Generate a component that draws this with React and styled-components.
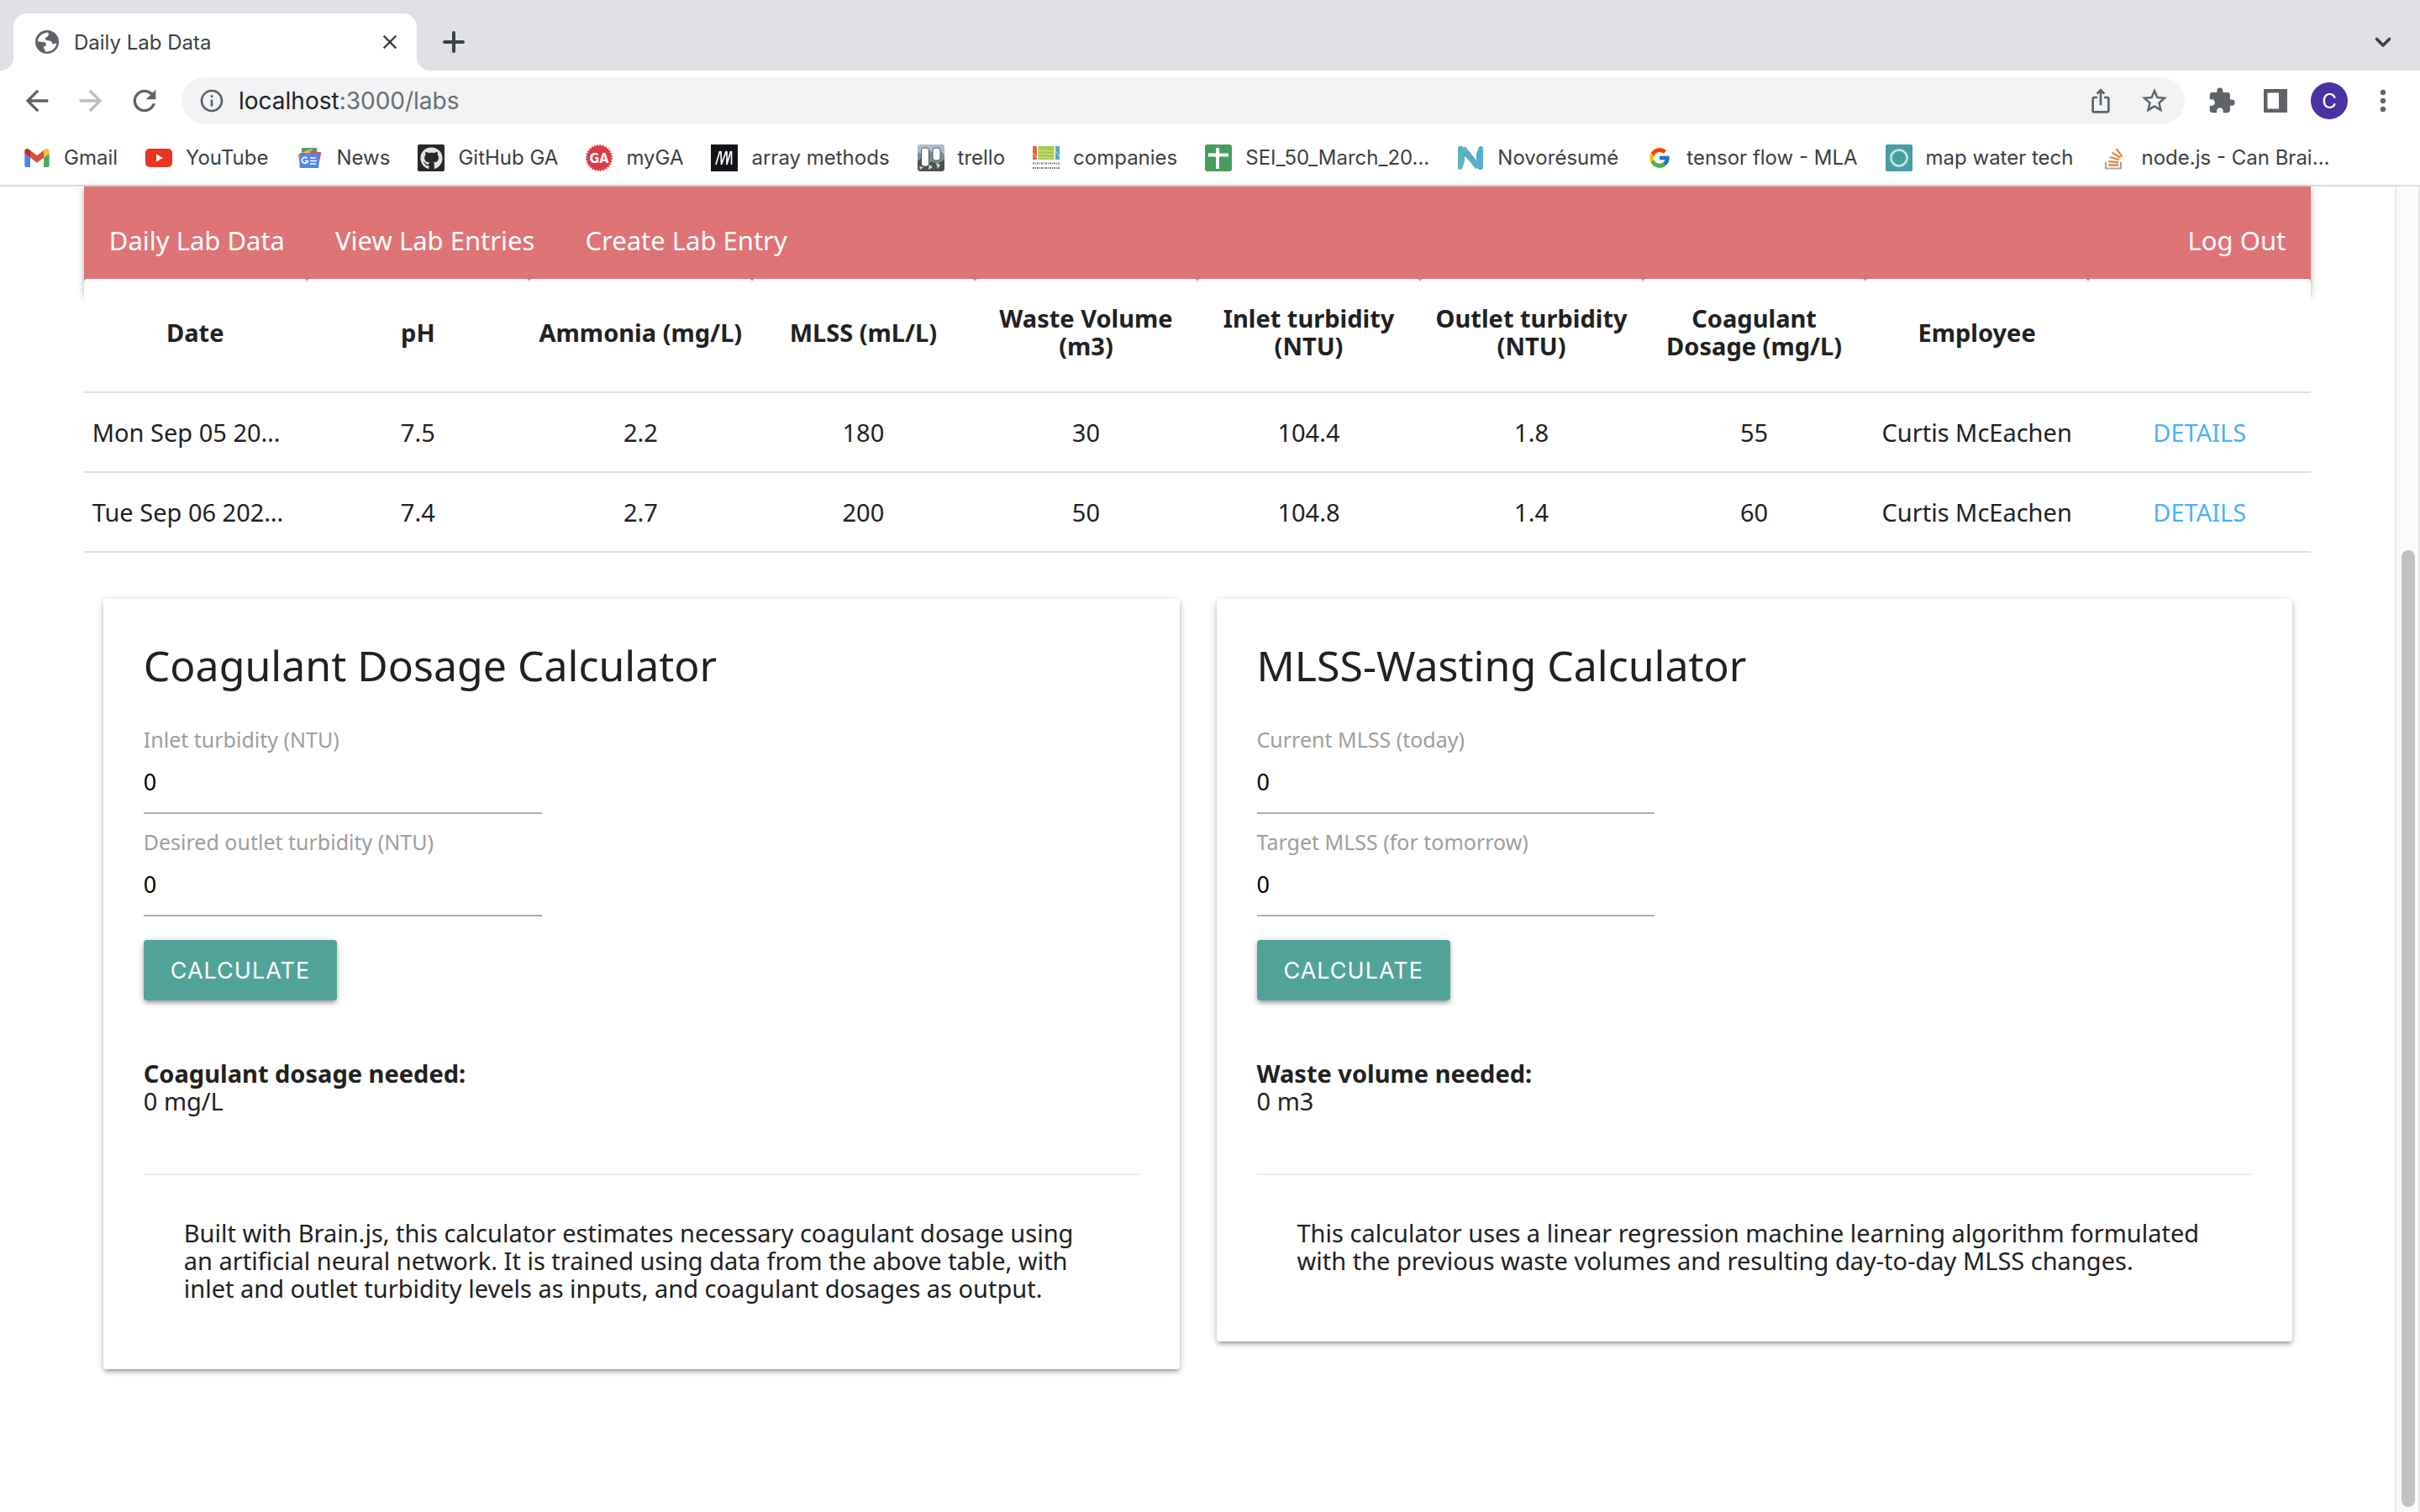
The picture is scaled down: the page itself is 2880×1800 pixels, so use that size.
import React, { useState } from "react";
import styled, { createGlobalStyle, css } from "styled-components";
import {
  MdArrowBack,
  MdArrowForward,
  MdClose,
  MdExtension,
  MdInfoOutline,
  MdIosShare,
  MdMoreVert,
  MdRefresh,
  MdStarBorder,
} from "react-icons/md";
import { FcGoogle } from "react-icons/fc";
import { FaGithub } from "react-icons/fa";

const uiFont = `Inter, Roboto, "Liberation Sans", sans-serif`;
const pageFont = `"Lucida Grande", "Noto Sans", "Open Sans", sans-serif`;

const raised = css`
  box-shadow: 0 4px 4px 0 rgba(0, 0, 0, 0.14), 0 6px 2px -4px rgba(0, 0, 0, 0.12),
    0 2px 10px 0 rgba(0, 0, 0, 0.2);
`;

const GlobalStyle = createGlobalStyle`
  *, *::before, *::after { box-sizing: border-box; }
  body { margin: 0; background: #fff; }
  button, input { font: inherit; margin: 0; }
  svg { display: block; flex: none; }
`;

const Window = styled.div`
  display: flex;
  flex-direction: column;
  min-height: 100vh;
  overflow: hidden;
  font-family: ${uiFont};
  color: #3c4043;
`;

/* ---------- browser chrome ---------- */

const TabStrip = styled.div`
  display: flex;
  align-items: flex-end;
  height: 84px;
  padding: 0 24px 0 16px;
  background: #dfe1e5;
`;

const Tab = styled.div`
  position: relative;
  display: flex;
  align-items: center;
  gap: 16px;
  width: 480px;
  height: 68px;
  padding: 0 18px 0 24px;
  border-radius: 16px 16px 0 0;
  background: #fff;
  font-size: 24px;

  &::before,
  &::after {
    content: "";
    position: absolute;
    bottom: 0;
    width: 16px;
    height: 16px;
  }
  &::before {
    right: 100%;
    background: radial-gradient(circle at 0 0, #dfe1e5 16px, #fff 16px);
  }
  &::after {
    left: 100%;
    background: radial-gradient(circle at 100% 0, #dfe1e5 16px, #fff 16px);
  }
`;

const TabTitle = styled.span`
  flex: 1;
`;

const IconButton = styled.button`
  display: flex;
  align-items: center;
  justify-content: center;
  width: ${(p) => p.$size || 64}px;
  height: ${(p) => p.$size || 64}px;
  padding: 0;
  border: 0;
  background: none;
  color: ${(p) => (p.$faded ? "#babcbe" : "#5f6368")};
`;

const StripButton = styled(IconButton)`
  height: 68px;
  color: #3c4043;
  margin-left: ${(p) => (p.$end ? "auto" : "12px")};
`;

const Toolbar = styled.div`
  display: flex;
  align-items: center;
  height: 72px;
  padding: 0 12px;
`;

const AddressBar = styled.div`
  display: flex;
  flex: 1;
  align-items: center;
  height: 56px;
  margin: 0 12px;
  padding: 0 4px 0 20px;
  border-radius: 28px;
  background: #f1f3f4;
  color: #5f6368;
`;

const Address = styled.span`
  flex: 1;
  margin-left: 16px;
  font-size: 28px;
  color: #6b6e71;

  b {
    font-weight: 400;
    color: #202124;
  }
`;

const Avatar = styled.span`
  display: flex;
  align-items: center;
  justify-content: center;
  width: 44px;
  height: 44px;
  border-radius: 50%;
  background: #4a32a3;
  color: #fff;
  font-size: 24px;
`;

const BookmarkBar = styled.nav`
  display: flex;
  align-items: center;
  gap: 33px;
  height: 66px;
  padding: 0 28px;
  border-bottom: 2px solid #dadcdf;
`;

const Bookmark = styled.a`
  display: flex;
  align-items: center;
  gap: 16px;
  color: #3c4043;
  font-size: 24px;
  line-height: 32px;
  text-decoration: none;
  white-space: nowrap;
`;

/* ---------- page ---------- */

const Viewport = styled.div`
  display: flex;
  flex: 1;
`;

const Page = styled.main`
  flex: 1;
  min-width: 0;
  font-family: ${pageFont};
  font-size: 29px;
  line-height: 33px;
  color: #212121;
`;

const Container = styled.div`
  width: 93%;
  margin: 0 auto;
`;

const NavBar = styled.nav`
  display: flex;
  align-items: center;
  height: 128px;
  background: #df7476;
  ${raised}
`;

const NavLink = styled.a`
  padding: 0 30px;
  margin-left: ${(p) => (p.$end ? "auto" : "0")};
  color: #fff;
  font-size: 31px;
  text-decoration: none;
`;

const LabTable = styled.table`
  position: relative;
  width: 100%;
  margin-top: -18px;
  border-spacing: 0;
  border-collapse: separate;
  table-layout: fixed;
`;

const HeadCell = styled.th`
  padding: 30px 8px 38px;
  border-bottom: 2px solid #e0e0e0;
  border-radius: 4px 4px 0 0;
  background: #fff;
  font-weight: 700;
`;

const Cell = styled.td`
  padding: 30px 10px;
  border-bottom: 2px solid #e0e0e0;
  text-align: ${(p) => (p.$left ? "left" : "center")};
  white-space: nowrap;
`;

const DetailsLink = styled.a`
  color: #4cb1f7;
  text-decoration: none;
`;

const Cards = styled.div`
  display: grid;
  grid-template-columns: 1fr 1fr;
  align-items: start;
  gap: 44px;
  padding: 55px 22px 0 23px;
`;

const Card = styled.form`
  padding: 48px 48px 80px;
  border-radius: 4px;
  background: #fff;
  ${raised}
`;

const CardTitle = styled.h1`
  margin: 0 0 39px;
  font-size: 50px;
  font-weight: 400;
  line-height: 62px;
`;

const Field = styled.label`
  display: block;
  width: 40%;
  margin-bottom: 15px;
  color: #9e9e9e;
  font-size: 25px;
  line-height: 36px;
  white-space: nowrap;
`;

const FieldInput = styled.input`
  display: block;
  width: 100%;
  height: 71px;
  padding: 0 0 4px;
  border: 0;
  border-bottom: 2px solid #adadad;
  outline: 0;
  background: none;
  color: #000;
  font-size: 27px;
`;

const CalculateButton = styled.button`
  height: 72px;
  margin: 13px 0 70px;
  padding: 0 32px;
  border: 0;
  border-radius: 4px;
  background: #52a49a;
  color: #fff;
  font-family: ${uiFont};
  font-size: 27px;
  letter-spacing: 1px;
  ${raised}
`;

const Result = styled.p`
  margin: 0;
`;

const Divider = styled.hr`
  height: 2px;
  margin: 70px 0 52px;
  border: 0;
  background: #ececec;
`;

const Note = styled.p`
  margin: 0 48px;
`;

const ScrollTrack = styled.div`
  display: flex;
  flex-direction: column;
  justify-content: flex-end;
  width: 30px;
  padding: 12px 4px 6px 6px;
  border: solid #e8e8e8;
  border-width: 0 2px;
  background: #fafafa;
`;

const ScrollThumb = styled.div`
  width: 16px;
  height: 73%;
  border-radius: 8px;
  background: #c1c1c1;
`;

/* ---------- icons ---------- */

const Glyph = ({ children, box = 32, size = 32 }) => (
  <svg width={size} height={size} viewBox={`0 0 ${box} ${box}`} fill="none" aria-hidden="true">
    {children}
  </svg>
);

const GlobeIcon = () => (
  <Glyph>
    <circle cx="16" cy="16" r="14" fill="#5f6368" />
    <path
      d="M17 4.500C10 5 5 10 4.800 15.500L11 16c3.500 0 4.500 2 3.500 4.500L11.500 22l3 5.500C20.500 28 26.500 24 27.300 17.500L22.500 18.500C22 14 18 15 14.500 13.500c-2-2 1-3.500 2.500-4.500 1.500-1.200 1.200-3 0-4.500z"
      fill="#fff"
    />
  </Glyph>
);

const PlusIcon = () => (
  <Glyph>
    <path d="M16 5v22M5 16h22" stroke="currentColor" strokeWidth="4" strokeLinecap="round" />
  </Glyph>
);

const ChevronIcon = () => (
  <Glyph>
    <path d="M8.500 12.500 16 20l7.500-7.500" stroke="currentColor" strokeWidth="3.600" strokeLinecap="round" strokeLinejoin="round" />
  </Glyph>
);

const SidePanelIcon = () => (
  <Glyph>
    <path d="M2 2h28v28H2zM6.500 6.500v19H20v-19z" fill="currentColor" fillRule="evenodd" />
  </Glyph>
);

const GmailIcon = () => (
  <svg width="32" height="32" viewBox="48 27 96 96" aria-hidden="true">
    <path fill="#4f86ec" d="M58 108h14V74L52 59v43c0 3.320 2.690 6 6 6" />
    <path fill="#58a55c" d="M120 108h14c3.320 0 6-2.690 6-6V59l-20 15" />
    <path fill="#f1bd42" d="M120 48v26l20-15v-8c0-7.420-8.470-11.650-14.400-7.200" />
    <path fill="#d95140" d="M72 74V48l24 18 24-18v26L96 92" />
    <path fill="#b3362a" d="M52 51v8l20 15V48l-5.600-4.200c-5.940-4.450-14.400-.22-14.400 7.200" />
  </svg>
);

const YouTubeIcon = () => (
  <Glyph>
    <rect y="5" width="32" height="22" rx="5" fill="#ea3323" />
    <path d="M13 11.500v9l8-4.500z" fill="#fff" />
  </Glyph>
);

const NewsIcon = () => (
  <Glyph>
    <rect x="7" y="4" width="18" height="14" rx="1" fill="#4f9d67" />
    <path d="M2 12 19 5l3 10-17 8z" fill="#f1bd42" />
    <path d="m17 7 13.500 2.500L27 24l-10-4z" fill="#d95140" />
    <rect x="4.500" y="10" width="23" height="18" rx="1" fill="#5186ec" />
    <path d="M13.500 16.500a3.500 3.500 0 1 0 .8 3h-3.300" stroke="#fff" strokeWidth="1.700" />
    <path d="M17 16h7M17 19.500h8M17 23h7" stroke="#fff" strokeWidth="1.700" />
  </Glyph>
);

const IconTile = styled.span`
  display: flex;
  align-items: center;
  justify-content: center;
  width: 32px;
  height: 32px;
  border-radius: 2px;
  background: ${(p) => p.$background || "none"};
  color: #e4e4e4;
`;

const GaIcon = () => (
  <Glyph>
    <circle cx="16" cy="16" r="14.500" fill="#da3b41" />
    <circle cx="16" cy="16" r="14.800" stroke="#da3b41" strokeWidth="2.200" strokeDasharray="2 1.320" />
    <text x="16" y="22" textAnchor="middle" fill="#fff" fontFamily="DejaVu Sans Condensed, Liberation Sans, sans-serif" fontWeight="700" fontSize="16">
      GA
    </text>
  </Glyph>
);

const ArrayIcon = () => (
  <Glyph>
    <rect width="32" height="32" fill="#15141a" />
    <path d="m6 24 4.500-15.500h1.500L12.500 24l5.500-15.500h1L19 24M19 24l4.500-15.500h1V24" stroke="#fff" strokeWidth="1.700" strokeLinejoin="bevel" />
  </Glyph>
);

const TrelloIcon = () => (
  <Glyph>
    <rect width="32" height="32" rx="4" fill="#7f8b95" />
    <path d="M0 4a4 4 0 0 1 4-4h24a4 4 0 0 1 4 4v8l-5-4-6 3-8-4-7 5-6-3z" fill="#aebdcb" />
    <path d="m0 20 5-4 4 9 8-5 6 3 9-5v10a4 4 0 0 1-4 4H4a4 4 0 0 1-4-4z" fill="#4c5150" />
    <path d="m14 24 4 3-5 3zm8-2 5 2-3 5zm-20 4 5 1-4 3z" fill="#d9dcdd" />
    <rect x="4.500" y="4" width="9" height="22" rx="3" fill="#fff" stroke="#50575c" />
    <rect x="18" y="4" width="9" height="15" rx="3" fill="#fff" stroke="#50575c" />
  </Glyph>
);

const CompaniesIcon = () => (
  <Glyph>
    <path d="M0 2h5v16H0z" fill="#d96b3b" />
    <path d="M6.500 2h19v16h-19z" fill="#a8c94a" />
    <path d="M27 2h5v16h-5z" fill="#55a5d6" />
    <path d="M6.500 8c6-3 12 2 19-1M6.500 12c6-3 12 2 19-1M6.500 16c6-3 12 2 19-1M0 10l5 6M27 8l5 6" stroke="#d9e8a6" />
    <path d="M0 22.500h32M0 28h32" stroke="#777" strokeWidth="1.800" strokeDasharray="2 1 1 1" />
  </Glyph>
);

const SheetIcon = () => (
  <Glyph>
    <rect width="32" height="32" rx="3" fill="#4a9c5e" />
    <path d="M4 12.500h24M15 4v25" stroke="#fff" strokeWidth="4" />
  </Glyph>
);

const NovoIcon = () => (
  <Glyph>
    <path d="M1 5c0-3 4-4 6-1.500l2 2.500v14L6.500 28C5 31 1 30.500 1 27.500z" fill="#5fb5bb" />
    <path d="M31 27c0 3-4 4-6 1.500L23 26V12l2.500-8C27 1 31 1.500 31 4.500z" fill="#53add0" />
    <path d="M1.500 3.500C3 1 6 1.500 8 4l22.500 24.500c-1.500 2-4 2-6 0L1.500 7z" fill="#57b0c8" />
    <path d="M7 4.500 25 27" stroke="#57b0c8" strokeWidth="7" />
  </Glyph>
);

const MapIcon = () => (
  <Glyph>
    <rect width="32" height="32" rx="2" fill="#479fa3" />
    <circle cx="16" cy="16" r="9.500" stroke="#b5e2df" strokeWidth="2.600" />
    <path d="M6 14c1-9 19-10 20 2M7 19c3 9 15 8 18-1" stroke="#e3f5f3" />
  </Glyph>
);

const StackOverflowIcon = () => (
  <Glyph>
    <path d="M5 21v7.500h18V21" stroke="#a5a7aa" strokeWidth="2.200" />
    <path d="M8 24.500h12M8.300 20.200l11.800 1.200M9.500 15l11.500 3.200M12.500 9.500l10 6.200M17.500 5l7.200 9.500" stroke="#e5883e" strokeWidth="2.300" />
  </Glyph>
);

/* ---------- data ---------- */

const bookmarks = [
  { label: "Gmail", icon: <GmailIcon /> },
  { label: "YouTube", icon: <YouTubeIcon /> },
  { label: "News", icon: <NewsIcon /> },
  { label: "GitHub GA", icon: <IconTile $background="#26292c"><FaGithub size={27} /></IconTile> },
  { label: "myGA", icon: <GaIcon /> },
  { label: "array methods", icon: <ArrayIcon /> },
  { label: "trello", icon: <TrelloIcon /> },
  { label: "companies", icon: <CompaniesIcon /> },
  { label: "SEI_50_March_20…", icon: <SheetIcon /> },
  { label: "Novorésumé", icon: <NovoIcon /> },
  { label: "tensor flow - MLA", icon: <IconTile><FcGoogle size={28} /></IconTile> },
  { label: "map water tech", icon: <MapIcon /> },
  { label: "node.js - Can Brai…", icon: <StackOverflowIcon /> },
];

const columns = [
  "Date",
  "pH",
  "Ammonia (mg/L)",
  "MLSS (mL/L)",
  "Waste Volume (m3)",
  "Inlet turbidity (NTU)",
  "Outlet turbidity (NTU)",
  "Coagulant Dosage (mg/L)",
  "Employee",
  "",
];

const entries = [
  ["Mon Sep 05 20…", "7.5", "2.2", "180", "30", "104.4", "1.8", "55", "Curtis McEachen"],
  ["Tue Sep 06 202…", "7.4", "2.7", "200", "50", "104.8", "1.4", "60", "Curtis McEachen"],
];

const calculators = [
  {
    title: "Coagulant Dosage Calculator",
    fields: ["Inlet turbidity (NTU)", "Desired outlet turbidity (NTU)"],
    resultLabel: "Coagulant dosage needed:",
    result: "0 mg/L",
    note: "Built with Brain.js, this calculator estimates necessary coagulant dosage using an artificial neural network. It is trained using data from the above table, with inlet and outlet turbidity levels as inputs, and coagulant dosages as output.",
  },
  {
    title: "MLSS-Wasting Calculator",
    fields: ["Current MLSS (today)", "Target MLSS (for tomorrow)"],
    resultLabel: "Waste volume needed:",
    result: "0 m3",
    note: "This calculator uses a linear regression machine learning algorithm formulated with the previous waste volumes and resulting day-to-day MLSS changes.",
  },
];

/* ---------- components ---------- */

function Calculator({ title, fields, resultLabel, result, note }) {
  const [values, setValues] = useState(fields.map(() => "0"));
  const update = (index, value) =>
    setValues((current) => current.map((v, i) => (i === index ? value : v)));

  return (
    <Card onSubmit={(event) => event.preventDefault()}>
      <CardTitle>{title}</CardTitle>
      {fields.map((field, i) => (
        <Field key={field}>
          {field}
          <FieldInput value={values[i]} onChange={(e) => update(i, e.target.value)} />
        </Field>
      ))}
      <CalculateButton type="submit">CALCULATE</CalculateButton>
      <Result>
        <strong>{resultLabel}</strong>
        <br />
        {result}
      </Result>
      <Divider />
      <Note>{note}</Note>
    </Card>
  );
}

function BrowserChrome() {
  return (
    <header>
      <TabStrip>
        <Tab>
          <GlobeIcon />
          <TabTitle>Daily Lab Data</TabTitle>
          <IconButton $size={28} aria-label="Close tab">
            <MdClose size={28} color="#3c4043" />
          </IconButton>
        </Tab>
        <StripButton aria-label="New tab"><PlusIcon /></StripButton>
        <StripButton $end aria-label="Search tabs" $size={40}><ChevronIcon /></StripButton>
      </TabStrip>
      <Toolbar>
        <IconButton aria-label="Back"><MdArrowBack size={40} /></IconButton>
        <IconButton $faded aria-label="Forward"><MdArrowForward size={40} /></IconButton>
        <IconButton aria-label="Reload"><MdRefresh size={40} /></IconButton>
        <AddressBar>
          <MdInfoOutline size={32} />
          <Address><b>localhost</b>:3000/labs</Address>
          <IconButton aria-label="Share"><MdIosShare size={32} /></IconButton>
          <IconButton aria-label="Bookmark this tab"><MdStarBorder size={36} /></IconButton>
        </AddressBar>
        <IconButton aria-label="Extensions"><MdExtension size={34} /></IconButton>
        <IconButton aria-label="Side panel"><SidePanelIcon /></IconButton>
        <IconButton aria-label="Profile"><Avatar>C</Avatar></IconButton>
        <IconButton aria-label="Menu"><MdMoreVert size={40} /></IconButton>
      </Toolbar>
      <BookmarkBar>
        {bookmarks.map(({ label, icon }) => (
          <Bookmark key={label} href="#">
            {icon}
            {label}
          </Bookmark>
        ))}
      </BookmarkBar>
    </header>
  );
}

export default function App() {
  return (
    <Window>
      <GlobalStyle />
      <BrowserChrome />
      <Viewport>
        <Page>
          <Container>
            <NavBar>
              <NavLink href="#">Daily Lab Data</NavLink>
              <NavLink href="#">View Lab Entries</NavLink>
              <NavLink href="#">Create Lab Entry</NavLink>
              <NavLink href="#" $end>Log Out</NavLink>
            </NavBar>
            <LabTable>
              <thead>
                <tr>
                  {columns.map((name) => (
                    <HeadCell key={name}>{name}</HeadCell>
                  ))}
                </tr>
              </thead>
              <tbody>
                {entries.map((entry) => (
                  <tr key={entry[0]}>
                    {entry.map((value, i) => (
                      <Cell key={columns[i]} $left={i === 0}>{value}</Cell>
                    ))}
                    <Cell><DetailsLink href="#">DETAILS</DetailsLink></Cell>
                  </tr>
                ))}
              </tbody>
            </LabTable>
            <Cards>
              {calculators.map((calculator) => (
                <Calculator key={calculator.title} {...calculator} />
              ))}
            </Cards>
          </Container>
        </Page>
        <ScrollTrack>
          <ScrollThumb />
        </ScrollTrack>
      </Viewport>
    </Window>
  );
}
